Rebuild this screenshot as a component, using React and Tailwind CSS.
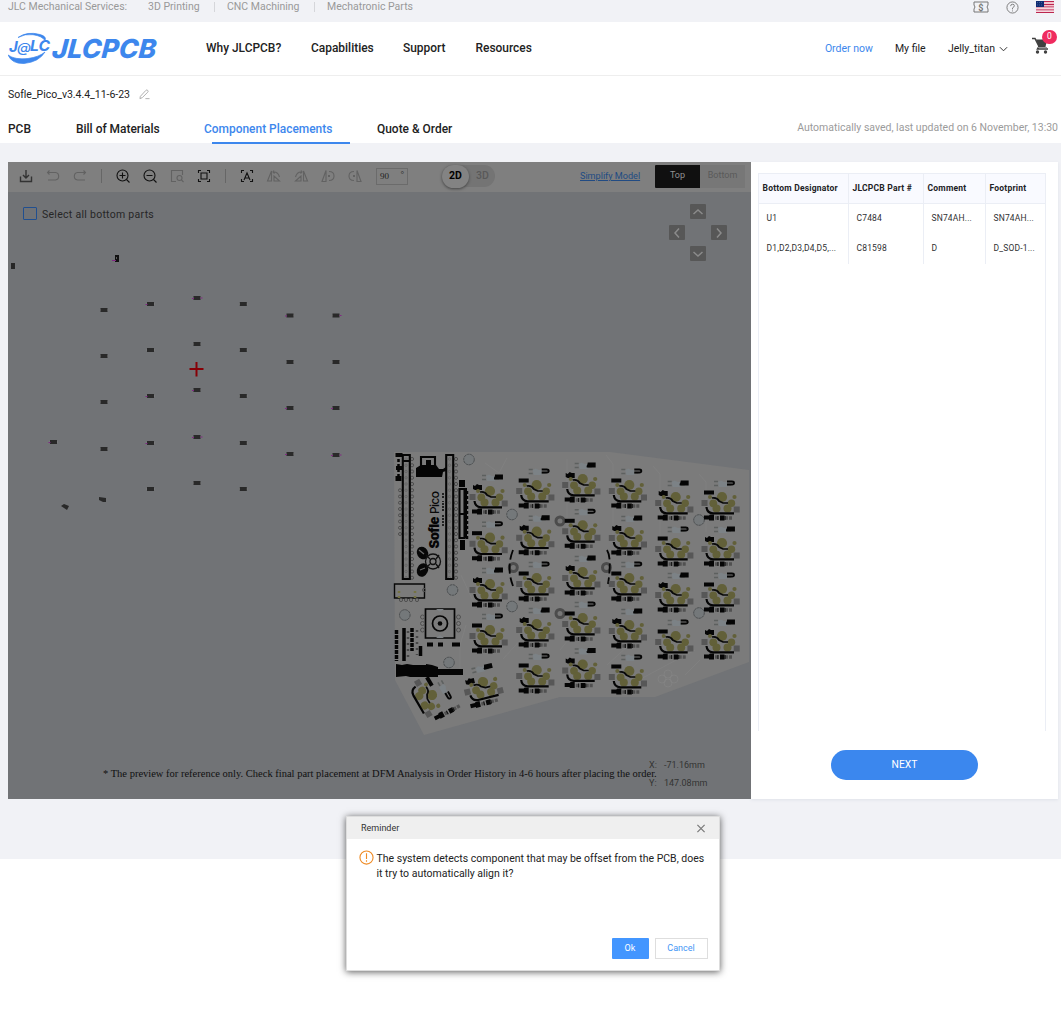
import React from "react";

const columns = [
  [490, [491, 537.7, 584, 630]],
  [536.7, [485, 531.7, 578, 624, 670]],
  [582.7, [479, 525.3, 572, 618, 664.5]],
  [629.3, [485, 532, 578, 625, 671]],
  [675.7, [497, 543, 589, 636]],
  [722, [497, 543, 589, 636]],
];

const diodes = [
  [104, 310], [150.5, 304, 1], [197, 298, 3], [243.3, 304], [290, 315.5, 1], [336, 315.5, 2],
  [104, 356], [150.5, 350], [197, 344], [243.3, 350], [290, 362], [336, 362],
  [104, 402], [150.5, 396, 1], [197, 390, 1], [243.3, 396], [290, 408, 1], [336, 408, 1],
  [53.5, 442, 1], [104, 449], [150.5, 443, 1], [197, 437, 3], [243.3, 443], [290, 454, 1], [336, 455, 3],
  [150.5, 489], [197, 483], [243.3, 489],
];

function DiodeRow() {
  return (
    <g>
      <path d="M-18 18.500h5l1-1h4v6h-5v-1h-5zM-2 18.500h4.500v5h-4.500z" fill="#050505" />
      <path d="M-7 21h4M3 21h8" stroke="#515151" strokeWidth="3.400" strokeDasharray="3 1" />
      <path d="M-4 19v4M3 19v4" stroke="#101010" strokeWidth="1.100" />
    </g>
  );
}

function KeySwitch({ x, y, turn = 0, alt, row = true }) {
  return (
    <g transform={`translate(${x} ${y}) rotate(${turn})`}>
      <path d="M-8-15.500h4M-8-11.500h4M4-12h5" stroke="#5d605f" strokeWidth="1.6" />
      <path d="M-4-15L-1-16.500L2-15H5V-10H-3Z" fill="#7c8286" />
      <path d={alt ? "M5-15.500h5q2 0 2 1.5t-2 1.500h-5" : "M5-15.500h7v3h-8"} fill={alt ? "none" : "#050505"} stroke="#050505" strokeWidth="1.9" />
      <path d={alt ? "M-18-6.500h10v4h-10z" : "M-17-6l2 1 2-2 2 1h3v5h-7l-2-1z"} fill="#050505" />
      <g fill="#626039">
        <circle r="5.1" /><circle cx="-12" cy="0" r="2" /><circle cx="12.500" cy="0" r="2.1" />
        <circle cx="9.500" cy="6.300" r="3.700" /><circle cx="-8.700" cy="6.300" r="3.900" />
        <circle cx="-5.500" cy="11.500" r="4" /><circle cx="5.500" cy="11.500" r="4" />
      </g>
      <path d="M-20.500 3h6v6h-6zM11.700 9.500h6v6h-6z" fill="#575757" />
      <path d="M-10 1Q-5 0-3 4L1 6H6" fill="none" stroke="#090909" strokeWidth="1.700" />
      <path d="M-15.500 10Q-15 16-9 16.300H12" fill="none" stroke="#050505" strokeWidth="2.200" />
      {row ? <DiodeRow /> : null}
    </g>
  );
}

function Board() {
  const pins = Array.from({ length: 20 }, (_, i) => 459 + i * 6.25);
  return (
    <g>
      <path d="M394 452H610L749 470V662L655 697H560L424 735L395 680Z" fill="#7b7b7b" />
      <g fill="none" stroke="#828282" strokeWidth=".7">
        <path d="M485 463l14 10 8-15M567 459v80M606 455l7 9v75M653 466l7 8v70M699 474l7 8v50M461 575l13 28M466 625l-6 20v25M503 659l22-24M560 650l20-25M607 665l22-20M399 520v20M700 660l-15 15M620 690l75-40" />
      </g>
      {[[469, 459.5], [512, 514.5], [452.5, 590], [404.8, 615], [512, 606.5], [449, 662.5], [699, 520], [699, 613]].map(([x, y]) => (
        <circle key={`${x}-${y}`} cx={x} cy={y} r="5.3" fill="#74787a" stroke="#4b4e50" strokeWidth="1" strokeDasharray="2.5 .6" />
      ))}
      {[[560, 521], [513.3, 567.5], [560, 613.5], [606.5, 567.5]].map(([x, y]) => (
        <circle key={`${x}-${y}`} cx={x} cy={y} r="4" fill="#777" stroke="#4c4c4c" strokeWidth="3" />
      ))}
      <g fill="none" stroke="#484848" strokeWidth=".9">
        {pins.map((y) => (
          <g key={y}><circle cx="412" cy={y} r="1.6" /><circle cx="456" cy={y} r="1.6" /><circle cx="406" cy={y} r="1.2" stroke="#656565" /><circle cx="449.5" cy={y} r="1.2" stroke="#656565" /></g>
        ))}
        {pins.slice(5, 13).map((y) => <circle key={y} cx="400" cy={y} r="1.5" />)}
      </g>
      <g fill="none" stroke="#050505" strokeWidth="2.1">
        <path d="M402.8 455h7v124h-7zM402.8 461h7M446.2 455h7v124h-7z" />
        <path d="M459.5 489v49h5v-49zM459.5 514h5" />
        <path d="M421 457h14v9h-14z" />
      </g>
      <path d="M395.5 453h7v4h-7zM396 466h6v4h-6zM395.5 476h6v5h-6zM416 468l5-3h5v-5h5v5h5l3 4h4l3-2v4l-3 1-1 5h-26v-8zM459 480h6v7h-6zM464 488h3v50h-3zM460 540h5v10h-5z" fill="#050505" />
      <path d="M398.500 454v27M467 491v48" stroke="#050505" strokeWidth="2.5" strokeDasharray="3 2" />
      <text transform="translate(439 548.500) rotate(-90)" fill="#060606" fontFamily="Inter, sans-serif" fontSize="13" fontWeight="900" textLength="32">Sofle</text>
      <text transform="translate(439 514) rotate(-90)" fill="#090909" fontFamily="Inter, sans-serif" fontSize="12" fontWeight="500" textLength="23">Pico</text>
      <path d="M443 526v-12M443 511v-10M443 498v-5" stroke="#191919" strokeWidth="1.8" strokeDasharray="2 1" />
      <g fill="#070707">
        <ellipse cx="422.500" cy="553" rx="5.500" ry="6.500" transform="rotate(-30 422.500 553)" /><ellipse cx="422.500" cy="570" rx="5.500" ry="7" transform="rotate(25 422.500 570)" />
      </g>
      <g fill="none" stroke="#111" strokeWidth="1.3">
        <circle cx="433" cy="561.500" r="7.500" /><circle cx="433" cy="561.500" r="3" />
        <path d="M430 559l-4-4M436 559l3-4M430 564l-4 4M436 564l3 4" />
        <path d="M419 550l5 4M420 570l5-2" stroke="#686868" />
      </g>
      <path d="M394.5 584h30v14h-30z" fill="none" stroke="#080808" strokeWidth="1.4" />
      <path d="M399 591v7M415 591v7" stroke="#757342" strokeWidth="2.5" strokeDasharray="2 3" />
      <g fill="none" stroke="#505050"><circle cx="424" cy="590" r="1.6" />{[401, 406, 411, 417].map((x) => <circle key={x} cx={x} cy="600" r="1.6" />)}</g>
      <g fill="none" stroke="#050505">
        <path d="M425.5 609h29v29h-29z" strokeWidth="1.7" /><circle cx="440" cy="623.5" r="7.5" strokeWidth="1.7" />
      </g>
      <path d="M436 609h8l-4 3zM436 638h8l-4-3z" fill="#7f8386" />
      <circle cx="440" cy="623.5" r="2.3" fill="#050505" />
      <g fill="none" stroke="#505050">{[617, 623.5, 630].map((y) => <g key={y}><circle cx="422.5" cy={y} r="2" /><circle cx="458.5" cy={y} r="2" /></g>)}</g>
      <g stroke="#050505" strokeWidth="3.5" fill="none">
        <path d="M396.5 630v31M412 628v23" strokeDasharray="4 1" /><path d="M404 628v33M420.5 646v10" /><path d="M427 644.500h6M438 644.500h5M452 644.500h8" strokeWidth="4" />
        <path d="M408 631v29M417 630v25" stroke="#484848" strokeWidth="2.5" strokeDasharray="2 4" />
      </g>
      <path d="M396 664l6 1 5-1 6 1h13v-1l6 1 6 2v2h25v6h-25v2h-28l-4-1-10 1z" fill="#050505" />
      <path d="M513 550q-7 18 0 36M607 550q5 8 1 34" fill="none" stroke="#050505" strokeWidth="1.8" strokeDasharray="10 4" />
      {columns.map(([x, ys], c) => ys.map((y, r) => <KeySwitch key={`${x}-${y}`} x={x} y={y} alt={(c + r) % 2 === 1} />))}
      <KeySwitch x={483} y={682} turn={-14} />
      <KeySwitch x={432} y={695} turn={60} alt row={false} />
      <g transform="translate(441 692) rotate(-28)"><DiodeRow /></g>
      <g fill="none" stroke="#858585" strokeWidth=".7"><circle cx="668" cy="674" r="4" /><circle cx="662" cy="679" r="4" /><circle cx="674" cy="679" r="4" /><circle cx="668" cy="683" r="4" /></g>
    </g>
  );
}

function PlacementCanvas() {
  return (
    <svg className="block h-[607px] w-[743px]" viewBox="8 192 743 607">
      <path d="M8 192h743v607H8z" fill="#717376" />
      <Board />
      {diodes.map(([x, y, mark]) => (
        <g key={`${x}-${y}`}>
          <path d={`M${x - 4} ${y}h8`} stroke="#858585" strokeWidth="2" />
          <path d={`M${x - 3.5} ${y}h7`} stroke="#292929" strokeWidth="4" />
          {mark & 1 ? <path d={`M${x - 5} ${y + 0.5}h2`} stroke="#812982" /> : null}
          {mark & 2 ? <path d={`M${x + 3.5} ${y}h2`} stroke="#812982" /> : null}
        </g>
      ))}
      <path d="M11 263h4v6h-4z" fill="#262626" />
      <path d="M115 255h4v7h-4z" fill="#111" /><path d="M112 260.500h4" stroke="#812982" /><path d="M116 258h1" stroke="#aaa" />
      <path d="M61 506l3-2 5 2-2 4-3-2zM99 497l7 1v4l-3 0-4-2z" fill="#292929" />
      <path d="M189.500 369h14M196.500 362v14.500" stroke="#870006" strokeWidth="2" />
    </svg>
  );
}

function Glyph({ children, dim, className = "" }) {
  return (
    <svg viewBox="0 0 16 16" className={`h-4 w-4 shrink-0 ${className}`} fill="none" stroke={dim ? "#626262" : "#111"} strokeWidth="1.1">
      {children}
    </svg>
  );
}

function Toolbar() {
  const flip = <><path d="M5.500 3v10H1.500zM8 13V8l5.500 5z" /><path d="M8 4q4 0 5.500 5M8 2.500L7 4l1.500 1.500" /></>;
  const spin = <><path d="M6 2.500v11H2zM9 3.500q5 0 5 4.500t-5 4.500" /><path d="M8 7h2v2H8z" fill="#626262" stroke="none" /></>;
  return (
    <div className="flex h-[30px] items-center bg-[#7f7f7f] pl-[10px] pb-[2px]">
      <div className="flex items-center">
        <Glyph className="mr-[11px]"><path d="M2.500 8.500v5h11v-5M8 2v8M5 7l3 3 3-3" stroke="#333" strokeWidth="1.400" /></Glyph>
        <Glyph dim className="mr-[11px]"><path d="M4.500 2.500l-2 2 2 2M2.500 4.500h8a3.800 3.800 0 0 1 0 7.500H3" /></Glyph>
        <Glyph dim className="mr-[13px]"><path d="M11.500 2.500l2 2-2 2M13.500 4.500h-8a3.800 3.800 0 0 0 0 7.500H13" /></Glyph>
        <i className="mr-[13px] h-[14px] w-px bg-[#666]" />
        <Glyph className="mr-[11px]"><circle cx="7.500" cy="7.500" r="5.500" /><path d="M11.500 11.500l3 3M4.500 7.500h6M7.500 4.500v6" /></Glyph>
        <Glyph className="mr-[11px]"><circle cx="7.500" cy="7.500" r="5.500" /><path d="M11.500 11.500l3 3M4.500 7.500h6" /></Glyph>
        <Glyph dim className="mr-[11px]"><path d="M7 13.500H2.500V2.500h11V7" /><circle cx="10.500" cy="10" r="2.500" /><path d="M12.500 12l2 2" /></Glyph>
        <Glyph className="mr-[13px]"><path d="M2.500 5V2.500H5M11 2.500h2.500V5M13.500 11v2.500H11M5 13.500H2.500V11" /><path d="M5 5h6v6H5z" /></Glyph>
        <i className="mr-[13px] h-[14px] w-px bg-[#666]" />
        <Glyph className="mr-[11px]"><path d="M2.500 5V2.500H5M11 2.500h2.500V5M13.500 11v2.500H11M5 13.500H2.500V11M5 12l3-7 3 7M6 10h4" /></Glyph>
        <Glyph dim className="mr-[11px]">{flip}</Glyph>
        <Glyph dim className="mr-[11px] -scale-x-100">{flip}</Glyph>
        <Glyph dim className="mr-[11px]">{spin}</Glyph>
        <Glyph dim className="-scale-x-100">{spin}</Glyph>
      </div>
      <div className="ml-[13px] flex h-[17px] w-[32px] items-center justify-between border border-[#6b6b6b] px-[3px] font-['Liberation_Serif',serif] text-[9px] text-[#222]"><span className="pt-[2px]">90</span><span className="-mt-[3px]">°</span></div>
      <div className="ml-[34px] flex h-[22px] w-[53px] items-center rounded-full bg-[#747474] text-[10.5px]">
        <span className="flex h-[23px] w-[27px] items-center justify-center rounded-full bg-[#838383] font-bold text-black shadow-[0_1px_3px_#444]">2D</span>
        <span className="ml-[7px] font-medium text-[#595959]">3D</span>
      </div>
      <span className="ml-[85px] w-[75px] pt-[2px] text-[9.1px] whitespace-nowrap text-[#214b83] underline">Simplify Model</span>
      <div className="ml-auto mr-[6px] flex h-[23px] w-[90px] text-[9px]">
        <span className="flex w-[45px] items-center justify-center rounded-l-[1px] bg-[#101010] text-[#929292]">Top</span>
        <span className="flex flex-1 items-center justify-center bg-[#777] text-[#5a5a5a]">Bottom</span>
      </div>
    </div>
  );
}

function Arrow({ turn }) {
  return <span className="flex h-[15px] w-4 items-center justify-center rounded-[1px] bg-[#575757]"><svg viewBox="0 0 12 12" className={`h-3 w-3 ${turn}`}><path d="M1.500 8L6 4l4.500 4" fill="none" stroke="#8b8b8b" strokeWidth="1.500" /></svg></span>;
}

function Preview() {
  return (
    <div className="relative h-[637px] w-[743px] shrink-0 overflow-hidden">
      <Toolbar />
      <PlacementCanvas />
      <label className="absolute top-[44px] left-[15px] flex items-center gap-[5px] text-[10.5px] tracking-[0.28px] text-[#262626]">
        <span className="-mt-px h-[13px] w-[14px] rounded-[1px] border border-[#214f8f]" /><span className="pt-px">Select all bottom parts</span>
      </label>
      <div className="absolute top-[42px] right-[24px] grid grid-cols-[16px_16px_16px] grid-rows-[15px_15px_15px] gap-x-[5px] gap-y-[6px]">
        <i /><Arrow turn="" /><i />
        <Arrow turn="-rotate-90" /><i /><Arrow turn="rotate-90" />
        <i /><Arrow turn="rotate-180" /><i />
      </div>
      <p className="absolute top-[605px] left-[95px] w-[556px] font-['Liberation_Serif',serif] text-[10.5px] leading-[14px] whitespace-nowrap text-[#101010]">* The preview for reference only. Check final part placement at DFM Analysis in Order History in 4-6 hours after placing the order.</p>
      <div className="absolute top-[594px] left-[641px] grid grid-cols-[15px_auto] text-[9px] leading-[18px] text-[#333]"><span>X:</span><span>-71.16mm</span><span>Y:</span><span>147.08mm</span></div>
    </div>
  );
}

function Parts() {
  const rows = [["U1", "C7484", "SN74AH...", "SN74AH..."], ["D1,D2,D3,D4,D5,...", "C81598", "D", "D_SOD-1..."]];
  return (
    <div className="flex h-[637px] w-[307px] flex-col bg-white pt-[11px] pl-[7px] shadow-[0_1px_3px_#dfe2e9]">
      <div className="h-[558px] w-[288px] border border-b-0 border-[#ebeef5] text-[8.5px] text-[#303133]">
        <div className="grid h-[30px] grid-cols-[90px_75px_62px_59px] border-b border-[#ebeef5] bg-[#f9faff] font-bold">
          {["Bottom Designator", "JLCPCB Part #", "Comment", "Footprint"].map((x, i) => <span key={x} className={`flex items-center pl-[3.500px] whitespace-nowrap tracking-[0.22px] text-[#202124] ${i < 3 ? "border-r border-[#ebeef5]" : ""}`}>{x}</span>)}
        </div>
        {rows.map((row) => <div key={row[0]} className="grid h-[30px] grid-cols-[90px_75px_62px_59px]">{row.map((x, i) => <span key={i} className={`flex items-center pb-[2px] pl-[7.500px] tracking-[0.16px] whitespace-nowrap ${i < 3 ? "border-r border-[#ebeef5]" : ""}`}>{x}</span>)}</div>)}
      </div>
      <button className="mt-[19px] ml-[73px] h-[30px] w-[147px] rounded-full bg-[#3b87ee] text-[10.3px] text-white">NEXT</button>
    </div>
  );
}

function Logo() {
  return (
    <svg viewBox="0 0 150 34" className="h-[34px] w-[150px]" fill="#3d87ed">
      <path d="M10 5.500Q19-1 32 2.500Q39 4.500 37 8.500Q34 4 25 2.700Q17 1.500 10 5.500ZM0 23Q4 32 16 31.500Q31 30 37 20Q31 25 20 26.500Q7 28 0 23Z" stroke="#3d87ed" strokeWidth=".7" />
      <g fontFamily="Inter, sans-serif" fontStyle="italic">
        <text x="1" y="20" fontSize="15" fontWeight="700" textLength="9">J</text>
        <text x="9" y="19.500" fontSize="13" fontWeight="500" textLength="14" lengthAdjust="spacingAndGlyphs">@</text>
        <text x="22" y="19" fontSize="15" fontWeight="700" textLength="20" lengthAdjust="spacingAndGlyphs">LC</text>
        <text transform="translate(43.500 25.500) skewX(-5)" fontSize="26" fontWeight="800" textLength="104" lengthAdjust="spacingAndGlyphs">JLCPCB</text>
      </g>
    </svg>
  );
}

function Flag() {
  return <svg viewBox="0 0 18 12" className="h-3 w-[18px]"><path d="M0 0h18v12H0z" fill="#f2c2cd" />{[0, 3, 5.5, 8.5, 11].map((y) => <path key={y} d={`M0 ${y}h18v1H0z`} fill="#bb264e" />)}<path d="M0 7h18M0 10h18" stroke="#fff" strokeWidth=".7" /><path d="M0 0h8v6H0z" fill="#102d73" /><path d="M1 1.500h6M1 4h6" stroke="#5372a5" strokeWidth=".7" strokeDasharray="1 1" /></svg>;
}

function Cart() {
  return (
    <span className="relative block h-6 w-[25px]">
      <svg viewBox="0 0 18 18" className="h-[18px] w-[18px]" fill="#404040"><path d="M0 1.500h3l4 8-1.500 2.500H16" fill="none" stroke="#404040" strokeWidth="1.500" /><path d="M4 2.500h11l-1.500 7.500H7z" /><path d="M6 10.500h9" stroke="#999" /><circle cx="5.500" cy="15" r="1.700" /><circle cx="13.500" cy="15" r="1.700" /></svg>
      <b className="absolute -top-[7px] left-[10px] flex h-[14px] w-[15px] items-center justify-center rounded-full bg-[#ef2b5f] text-[8.5px] font-normal text-white">0</b>
    </span>
  );
}

function Reminder() {
  return (
    <section className="absolute top-[816px] left-[346px] h-[155px] w-[374px] border border-[#ddd] bg-white shadow-[0_1px_7px_rgba(0,0,0,0.65)]">
      <header className="flex h-[22px] items-center justify-between bg-[#efefef] pt-px pr-[13px] pl-[14px] text-[9px] text-[#333]">
        <span>Reminder</span><svg viewBox="0 0 10 10" className="h-[9px] w-[10px]"><path d="M1 1l8 8M9 1L1 9" stroke="#777" strokeWidth="1.300" /></svg>
      </header>
      <div className="flex gap-[3px] pt-[11px] pl-[11.500px]">
        <svg viewBox="0 0 16 16" className="h-[15px] w-[15px] shrink-0" fill="none" stroke="#ef8b25"><circle cx="8" cy="8" r="7" strokeWidth="1.200" /><path d="M8 3.500v6M8 11v1.500" strokeWidth="1.200" /></svg>
        <p className="pt-px text-[10.5px] leading-[15px] whitespace-nowrap text-[#222]">The system detects component that may be offset from the PCB, does<br />it try to automatically align it?</p>
      </div>
      <div className="mt-[57px] flex justify-end gap-[6px] pr-[11.500px] text-[9px]">
        <button className="h-[21px] w-[37px] rounded-[1px] bg-[#4396ff] text-white">Ok</button>
        <button className="h-[21px] w-[53px] border border-[#dedede] bg-white text-[#4396f5]">Cancel</button>
      </div>
    </section>
  );
}

export default function App() {
  return (
    <main className="relative h-[1025px] w-[1061px] overflow-hidden bg-white font-[Roboto,sans-serif] text-[#222]">
      <div className="flex h-[22px] justify-between bg-[#f1f2f6] pr-[7px] pl-2 text-[10.5px] leading-[13px] text-[#999]">
        <div className="flex whitespace-nowrap">
          <span className="w-[140px]">JLC Mechanical Services:</span><span className="w-[66px]">3D Printing</span><i className="mt-[2px] mr-3 h-[10px] w-px bg-[#d5d6da]" /><span className="w-[87px]">CNC Machining</span><i className="mt-[2px] mr-3 h-[10px] w-px bg-[#d5d6da]" /><span>Mechatronic Parts</span>
        </div>
        <div className="flex items-start pt-px">
          <svg viewBox="0 0 16 12" className="mr-[17px] h-3 w-4" fill="none" stroke="#777"><path d="M1 1h14v3l-1 2 1 2v3H1V8l1-2-1-2z" /><text x="5.200" y="9.500" fontSize="9" fontWeight="700" fill="#777" stroke="none">$</text></svg>
          <svg viewBox="0 0 14 14" className="mr-[17px] h-[13px] w-[13px]" fill="none" stroke="#777"><circle cx="7" cy="7" r="6" /><path d="M5 5.500q0-2 2-2t2 1.500-2 2.500V9M7 10.200v1" /></svg>
          <Flag />
        </div>
      </div>
      <header className="flex h-[54px] items-center border-b border-[#eee] pl-2 pr-[4px] text-[10.5px]">
        <Logo />
        <nav className="ml-[48px] flex text-[11.95px] leading-[17px] font-medium whitespace-nowrap">
          <span className="w-[105px]">Why JLCPCB?</span><span className="w-[92px]">Capabilities</span><span className="w-[72.500px]">Support</span><span>Resources</span>
        </nav>
        <div className="ml-auto flex items-center whitespace-nowrap">
          <span className="w-[70px] text-[#3d87ed]">Order now</span><span className="w-[53px]">My file</span><span>Jelly_titan</span>
          <svg viewBox="0 0 10 8" className="mr-[24px] ml-1 h-2 w-[9px]"><path d="M1 2l4 4 4-4" fill="none" stroke="#333" strokeWidth="1.100" /></svg><Cart />
        </div>
      </header>
      <div className="h-[67px]">
        <div className="flex h-[37px] items-center pl-2 text-[10.5px]"><span className="tracking-[-0.02px]">Sofle_Pico_v3.4.4_11-6-23</span><svg viewBox="0 0 12 12" className="ml-[9px] h-[11px] w-[11px]" fill="none" stroke="#aaa"><path d="M1.500 8L7.500 1.500q1-1 2 0t0 2L3.500 9.500l-2.500 1zM7 10.500h4.500" /></svg></div>
        <div className="flex h-[30px] items-center justify-between pr-[3px] pl-2 whitespace-nowrap">
          <div className="flex h-full text-[11.95px] leading-[32px] font-medium">
            <span className="w-[68px]">PCB</span><span className="w-[128px]">Bill of Materials</span><span className="relative w-[173px] text-[#3d87ed] after:absolute after:bottom-[-1px] after:left-2 after:h-[2px] after:w-[138px] after:bg-[#3d87ed]">Component Placements</span><span>Quote &amp; Order</span>
          </div>
          <span className="text-[10.5px] text-[#9b9b9b]">Automatically saved, last updated on 6 November, 13:30</span>
        </div>
      </div>
      <div className="flex h-[716px] items-start bg-[#f1f2f6] pt-[19px] pl-2"><Preview /><Parts /></div>
      <Reminder />
    </main>
  );
}
